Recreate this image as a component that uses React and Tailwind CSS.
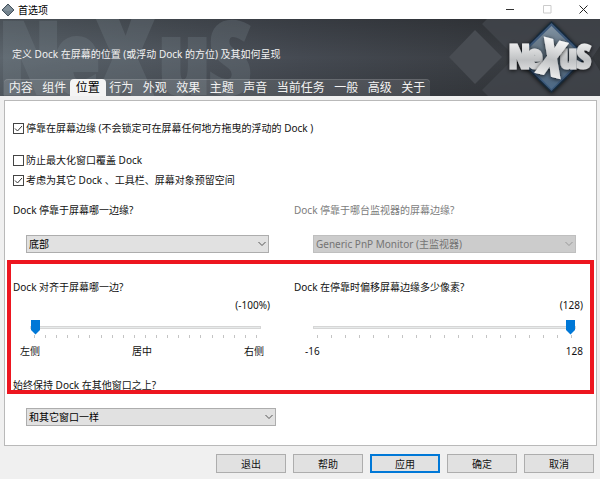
import React, { useState } from 'react';
import clsx from 'clsx';

const TABS = ['内容', '组件', '位置', '行为', '外观', '效果', '主题', '声音', '当前任务', '一般', '高级', '关于'];
const ACTIONS = ['退出', '帮助', '应用', '确定', '取消'];

const LOGO_LETTERS = [
  { char: 'N', x: 509 },
  { char: 'e', x: 527 },
  { char: 'u', x: 560 },
  { char: 'S', x: 577 },
];

function TitleBar() {
  return (
    <div className="flex h-[19px] items-center bg-white pl-px text-black">
      <svg width="14" height="14" viewBox="0 0 14 14" aria-hidden="true">
        <path d="M7 1 13 7 7 13 1 7Z" fill="#71818c" stroke="#44525d" />
        <path d="M7 2 12 7 7 8 2 7Z" fill="#84929b" />
      </svg>
      <h1 className="ml-[3px] flex-1 text-[10px] leading-4">首选项</h1>
      <button aria-label="最小化" className="flex h-4 w-[37px] items-center justify-center">
        <svg width="9" height="9" viewBox="0 0 9 9">
          <path d="M0 4.5H8" stroke="#333" />
        </svg>
      </button>
      <button aria-label="最大化" disabled className="flex h-4 w-[37px] items-center justify-center">
        <svg width="9" height="9" viewBox="0 0 9 9">
          <path d="M.5.5H8V8H.5Z" fill="none" stroke="#ccc" />
        </svg>
      </button>
      <button aria-label="关闭" className="flex h-4 w-[34px] items-center justify-center">
        <svg width="9" height="9" viewBox="0 0 9 9">
          <path d="M.5.5 8.5 8.5M8.5.5.5 8.5" stroke="#222" />
        </svg>
      </button>
    </div>
  );
}

function Watermark() {
  return (
    <svg className="absolute left-0 top-0" width="270" height="77" viewBox="0 19 270 77" aria-hidden="true">
      <g
        fill="#78848c"
        stroke="#78848c"
        strokeWidth="6"
        opacity="0.28"
        fontFamily="'Open Sans Condensed', 'Roboto Condensed', sans-serif"
        fontWeight="700"
      >
        <text x="0" y="92" fontSize="96">N</text>
        <text x="54" y="92" fontSize="96">e</text>
        <text x="96" y="104" fontSize="124">X</text>
        <text x="160" y="92" fontSize="96">u</text>
        <text x="210" y="92" fontSize="96">S</text>
      </g>
    </svg>
  );
}

function Logo() {
  return (
    <svg className="absolute right-0 top-0" width="160" height="77" viewBox="440 19 160 77" aria-label="NeXuS">
      <defs>
        <linearGradient id="gem" x1="0" y1="0" x2="0" y2="1">
          <stop offset="0" stopColor="#8193a3" />
          <stop offset="0.5" stopColor="#566675" />
          <stop offset="1" stopColor="#4f6b88" />
        </linearGradient>
        <linearGradient id="steel" gradientUnits="userSpaceOnUse" x1="0" y1="38" x2="0" y2="78">
          <stop offset="0" stopColor="#fafafa" />
          <stop offset="0.55" stopColor="#bfc1c3" />
          <stop offset="1" stopColor="#f0f0f0" />
        </linearGradient>
        <filter id="drop" x="-20%" y="-20%" width="140%" height="140%">
          <feDropShadow dx="0" dy="1" stdDeviation="2" floodColor="#000" floodOpacity="0.8" />
        </filter>
      </defs>
      <path d="M475 30 502 57 475 84 449 57Z" fill="#484c52" />
      <path d="M487 19 482 24 515 57 482 90 488 96H600V71L592 58 600 46V19Z" fill="#42464c" opacity="0.8" />
      <g filter="url(#drop)">
        <path d="M551.500 21 588 57 551.500 93 515 57Z" fill="#17293b" />
        <path d="M551.500 23 586 57 551.500 91 517 57Z" fill="#3c597a" />
        <path d="M551.500 26 583 57 551.500 89 520 57Z" fill="url(#gem)" />
      </g>
      <g
        fill="url(#steel)"
        stroke="url(#steel)"
        fontFamily="'Open Sans Condensed', 'Roboto Condensed', sans-serif"
        fontWeight="700"
      >
        <g filter="url(#drop)" strokeWidth="3">
          {LOGO_LETTERS.map(({ char, x }) => (
            <text key={char} x={x} y="68" fontSize="33">{char}</text>
          ))}
        </g>
        <g filter="url(#drop)" strokeWidth="3">
          <text x="552" y="75" fontSize="48" textAnchor="middle" transform="rotate(14 552 58)">X</text>
        </g>
      </g>
    </svg>
  );
}

function Header({ active, onChange }) {
  return (
    <header className="relative flex h-[77px] flex-col justify-between overflow-hidden bg-linear-to-r from-[#5c656d] via-[#454a52] to-[#34373b] text-[#f2f2f2]">
      <div className="absolute inset-0 bg-linear-to-b from-black/20 via-transparent to-black/15" />
      <Watermark />
      <Logo />
      <p className="relative pl-3 pt-[25px] text-[10px] leading-5">
        定义 Dock 在屏幕的位置 (或浮动 Dock 的方位) 及其如何呈现
      </p>
      <nav className="relative ml-1 flex h-[17px] w-[426px] rounded-t bg-white/10 shadow-[inset_0_1px_0_#ffffff22]" role="tablist">
        {TABS.map((tab) => (
          <button
            key={tab}
            role="tab"
            aria-selected={tab === active}
            onClick={() => onChange(tab)}
            className={clsx(
              'flex-auto whitespace-nowrap text-xs leading-4',
              tab === active && '-mx-px rounded-t bg-[#f4f4f4] px-px text-black'
            )}
          >
            {tab}
          </button>
        ))}
      </nav>
    </header>
  );
}

function Check({ children, ...props }) {
  return (
    <label className="flex h-5 items-center gap-[2px]">
      <span className="relative flex">
        <input
          type="checkbox"
          className="peer size-[11px] appearance-none border border-[#444] bg-white"
          {...props}
        />
        <svg
          className="pointer-events-none absolute inset-0 hidden peer-checked:block"
          width="11"
          height="11"
          viewBox="0 0 11 11"
        >
          <path d="M2 5.500 4.500 8 9 3" fill="none" stroke="#333" />
        </svg>
      </span>
      {children}
    </label>
  );
}

function Select({ options, disabled, ...props }) {
  return (
    <div className="relative">
      <select
        disabled={disabled}
        className={clsx(
          'block h-[18px] w-full appearance-none border pl-[2px] text-[10px] leading-4',
          disabled ? 'border-[#bfbfbf] bg-[#ccc] text-[#747474] opacity-100' : 'border-[#adadad] bg-[#e1e1e1] text-black'
        )}
        {...props}
      >
        {options.map((option) => (
          <option key={option}>{option}</option>
        ))}
      </select>
      <svg className="pointer-events-none absolute right-[3px] top-[6px]" width="8" height="6" viewBox="0 0 8 6">
        <path d="M.5 1 4 4.500 7.500 1" fill="none" stroke={disabled ? '#999' : '#555'} />
      </svg>
    </div>
  );
}

function Slider({ ticks, ...props }) {
  return (
    <>
      <input
        type="range"
        className="block h-4 w-full appearance-none bg-transparent [&::-webkit-slider-runnable-track]:h-[3px] [&::-webkit-slider-runnable-track]:border [&::-webkit-slider-runnable-track]:border-[#d6d6d6] [&::-webkit-slider-runnable-track]:bg-[#e7eaea] [&::-webkit-slider-thumb]:-mt-[7px] [&::-webkit-slider-thumb]:h-[15px] [&::-webkit-slider-thumb]:w-[9px] [&::-webkit-slider-thumb]:appearance-none [&::-webkit-slider-thumb]:bg-[#0078d7] [&::-webkit-slider-thumb]:[clip-path:polygon(0_0,100%_0,100%_70%,50%_100%,0_70%)]"
        {...props}
      />
      <div className="flex h-1 justify-between px-1">
        {Array.from({ length: ticks }, (_, i) => (
          <span key={i} className="h-[3px] w-px bg-[#c4c4c4]" />
        ))}
      </div>
    </>
  );
}

export default function App() {
  const [tab, setTab] = useState('位置');

  return (
    <div className="flex min-h-screen flex-col bg-[#f0f0f0] font-['Noto_Sans','Noto_Sans_CJK_SC',sans-serif] text-[10px] leading-5 text-[#111]">
      <TitleBar />
      <Header active={tab} onChange={setTab} />

      <main className="relative mx-1 mr-[3px] mt-1 border border-[#b9b9b9] bg-white pb-[19px] pl-2 pr-[13px] pt-[17px]">
        <Check defaultChecked>停靠在屏幕边缘 (不会锁定可在屏幕任何地方拖曳的浮动的 Dock )</Check>
        <div className="mt-3">
          <Check>防止最大化窗口覆盖 Dock</Check>
          <Check defaultChecked>考虑为其它 Dock 、工具栏、屏幕对象预留空间</Check>
        </div>

        <div className="mt-[10px] grid grid-cols-[281fr_289fr]">
          <div>
            <label htmlFor="edge" className="block">Dock 停靠于屏幕哪一边缘?</label>
            <div className="pl-[13px] pr-[25px] pt-[15px]">
              <Select id="edge" options={['底部', '顶部', '左侧', '右侧']} />
            </div>
          </div>
          <div>
            <label htmlFor="monitor" className="block text-[#7c7c7c]">Dock 停靠于哪台监视器的屏幕边缘?</label>
            <div className="pl-[19px] pr-[7px] pt-[15px]">
              <Select id="monitor" options={['Generic PnP Monitor (主监视器)']} disabled />
            </div>
          </div>
        </div>

        <div className="mt-6 grid grid-cols-[281fr_289fr]">
          <div>
            <label htmlFor="align" className="block">Dock 对齐于屏幕哪一边?</label>
            <output htmlFor="align" className="-mt-[2px] block pr-6 text-right">(-100%)</output>
            <div className="pl-[17px] pr-[33px] pt-1">
              <Slider id="align" ticks={21} min="-100" max="100" defaultValue="-100" />
            </div>
            <div className="flex justify-between pl-[7px] pr-[30px] pt-[2px]">
              <span>左侧</span>
              <span>居中</span>
              <span>右侧</span>
            </div>
          </div>
          <div>
            <label htmlFor="offset" className="block">Dock 在停靠时偏移屏幕边缘多少像素?</label>
            <output htmlFor="offset" className="-mt-[2px] block text-right">(128)</output>
            <div className="pl-[19px] pr-[7px] pt-1">
              <Slider id="offset" ticks={19} min="-16" max="128" defaultValue="128" />
            </div>
            <div className="flex justify-between pl-[11px] pt-[2px]">
              <span>-16</span>
              <span>128</span>
            </div>
          </div>
        </div>

        <div className="mt-[14px] grid grid-cols-[281fr_289fr]">
          <div>
            <label htmlFor="stack" className="block">始终保持 Dock 在其他窗口之上?</label>
            <div className="pl-[13px] pr-[18px] pt-[13px]">
              <Select id="stack" options={['和其它窗口一样', '总在最前', '总在最后']} />
            </div>
          </div>
        </div>

        <div className="pointer-events-none absolute bottom-[51px] left-[2px] right-[2px] top-[159px] border-4 border-[#ed1620]" />
      </main>

      <footer className="flex justify-end gap-[7px] pr-[6px] pt-2">
        {ACTIONS.map((action) => (
          <button
            key={action}
            className={clsx(
              'h-[19px] w-[70px] bg-[#e1e1e1] leading-4',
              action === '应用' ? 'border-2 border-[#0078d7]' : 'border border-[#adadad]'
            )}
          >
            {action}
          </button>
        ))}
      </footer>
    </div>
  );
}
